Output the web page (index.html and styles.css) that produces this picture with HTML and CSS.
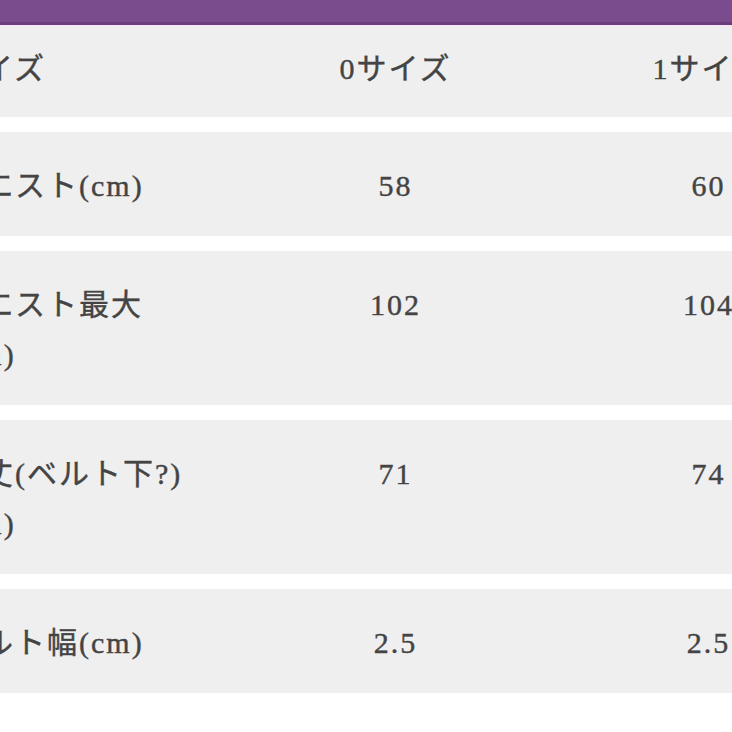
FILE: index.html
```html
<!DOCTYPE html>
<html lang="ja">
<head>
<meta charset="utf-8">
<title>サイズ表</title>
<link rel="stylesheet" href="styles.css">
</head>
<body>
<div class="page">
  <div class="topbar"></div>
  <div class="size-table">
    <div class="row head">
      <div class="cell label">サイズ</div>
      <div class="cell val">0サイズ</div>
      <div class="cell val">1サイズ</div>
    </div>
    <div class="row">
      <div class="cell label">ウエスト(cm)</div>
      <div class="cell val">58</div>
      <div class="cell val">60</div>
    </div>
    <div class="row">
      <div class="cell label">ウエスト最大(cm)</div>
      <div class="cell val">102</div>
      <div class="cell val">104</div>
    </div>
    <div class="row">
      <div class="cell label">着丈(ベルト下?)(cm)</div>
      <div class="cell val">71</div>
      <div class="cell val">74</div>
    </div>
    <div class="row">
      <div class="cell label">ベルト幅(cm)</div>
      <div class="cell val">2.5</div>
      <div class="cell val">2.5</div>
    </div>
  </div>
</div>
</body>
</html>
```
FILE: styles.css
```css
html, body {
  margin: 0;
  padding: 0;
  background: #ffffff;
  overflow: hidden;
}

.page {
  width: 732px;
  height: 732px;
  overflow: hidden;
}

.topbar {
  height: 22px;
  background: #7a4b8d;
  border-bottom: 3px solid #6c3e7e;
  box-shadow: 0 2px 0 #f4e7f4;
  margin-bottom: 2px;
}

.size-table {
  margin-left: -69px;
  width: 934px;
  display: flex;
  flex-direction: column;
  gap: 15px;
  font-family: "Liberation Serif", "Noto Sans CJK JP", serif;
  font-size: 30px;
  letter-spacing: 2px;
  color: #444444;
  -webkit-text-stroke: 0.4px #444444;
}

.row {
  display: grid;
  grid-template-columns: 308px 313px 313px;
  background: #efefef;
  line-height: 50px;
  padding: 29px 0 25px;
}

.row.head {
  padding: 17px 0 23px;
}

.cell.label {
  padding: 0 44px 0 20px;
  text-align: left;
}

.cell.val {
  text-align: center;
}
```
